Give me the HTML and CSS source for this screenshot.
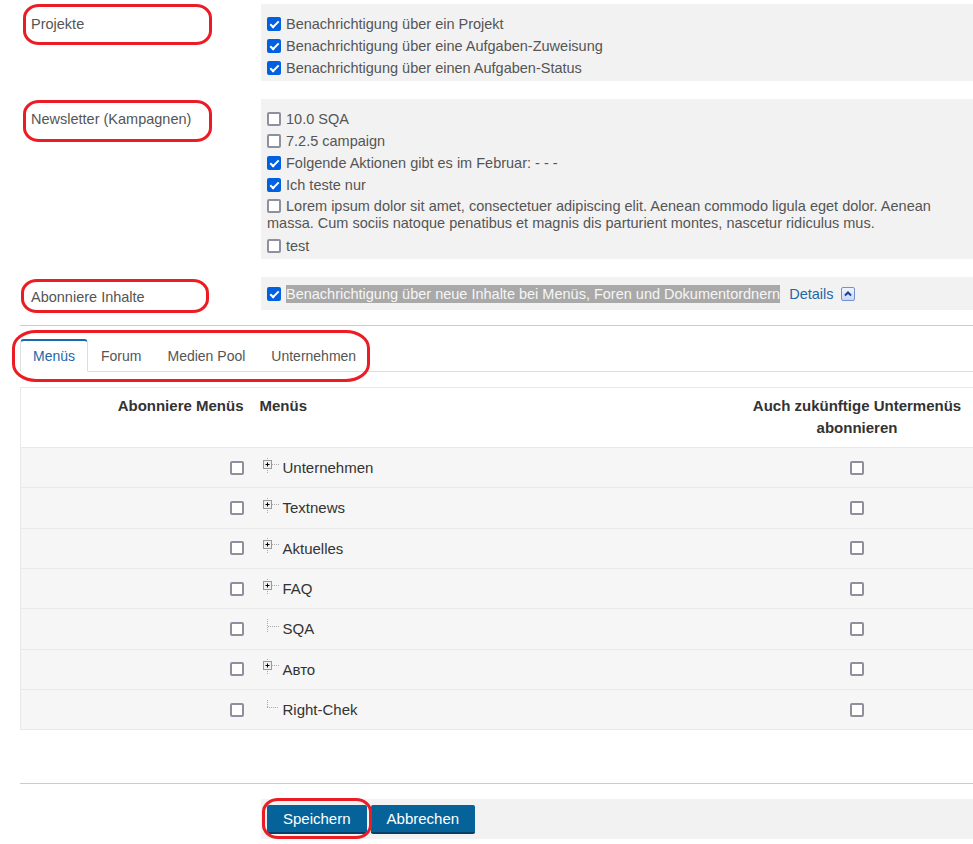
FILE: index.html
```html
<!DOCTYPE html>
<html lang="de">

<head>
    <meta charset="UTF-8">
    <title>Benachrichtigungen</title>
    <link rel="stylesheet" href="styles.css">
</head>

<body>
    <div class="page">

        <div class="setting">
            <div class="setting-label">Projekte</div>
            <div class="setting-box">
                <label class="opt"><input type="checkbox" class="cb" checked>Benachrichtigung über ein Projekt</label>
                <label class="opt"><input type="checkbox" class="cb" checked>Benachrichtigung über eine Aufgaben-Zuweisung</label>
                <label class="opt"><input type="checkbox" class="cb" checked>Benachrichtigung über einen Aufgaben-Status</label>
            </div>
        </div>

        <div class="setting">
            <div class="setting-label">Newsletter (Kampagnen)</div>
            <div class="setting-box">
                <label class="opt"><input type="checkbox" class="cb">10.0 SQA</label>
                <label class="opt"><input type="checkbox" class="cb">7.2.5 campaign</label>
                <label class="opt"><input type="checkbox" class="cb" checked>Folgende Aktionen gibt es im Februar: - - -</label>
                <label class="opt"><input type="checkbox" class="cb" checked>Ich teste nur</label>
                <label class="opt wrap"><input type="checkbox" class="cb">Lorem ipsum dolor sit amet, consectetuer adipiscing elit. Aenean commodo ligula eget dolor. Aenean massa. Cum sociis natoque penatibus et magnis dis parturient montes, nascetur ridiculus mus.</label>
                <label class="opt"><input type="checkbox" class="cb">test</label>
            </div>
        </div>

        <div class="setting last">
            <div class="setting-label">Abonniere Inhalte</div>
            <div class="setting-box single">
                <label class="opt"><input type="checkbox" class="cb" checked><span class="selected">Benachrichtigung über neue Inhalte bei Menüs, Foren und Dokumentordnern</span></label>
                <a href="#" class="details">Details</a>
                <span class="toggle">
                    <svg width="12" height="12" viewBox="0 0 12 12"><polyline points="3,7.5 6,4.5 9,7.5" fill="none" stroke="#1d3f93" stroke-width="2"/></svg>
                </span>
            </div>
        </div>

        <hr class="sep">

        <ul class="tabs">
            <li class="active"><a href="#">Menüs</a></li>
            <li><a href="#">Forum</a></li>
            <li><a href="#">Medien Pool</a></li>
            <li><a href="#">Unternehmen</a></li>
        </ul>

        <table class="menu-table">
            <colgroup>
                <col class="c-sub">
                <col>
                <col class="c-future">
            </colgroup>
            <thead>
                <tr>
                    <th class="col-sub">Abonniere Menüs</th>
                    <th class="col-name">Menüs</th>
                    <th class="col-future">Auch zukünftige Untermenüs abonnieren</th>
                </tr>
            </thead>
            <tbody>
                <tr>
                    <td class="col-sub"><input type="checkbox" class="cb"></td>
                    <td class="col-name"><span class="tree"><svg class="node" width="18" height="20" viewBox="0 0 18 20"><line x1="5.5" y1="0" x2="5.5" y2="15" stroke="#aaa" stroke-dasharray="1 1"/><line x1="10" y1="6.5" x2="17" y2="6.5" stroke="#aaa" stroke-dasharray="1 1"/><rect x="1.5" y="2.5" width="8" height="8" fill="#f0f0f0" stroke="#999"/><path d="M3.5 6.5h4M5.5 4.5v4" stroke="#000"/></svg>Unternehmen</span></td>
                    <td class="col-future"><input type="checkbox" class="cb"></td>
                </tr>
                <tr>
                    <td class="col-sub"><input type="checkbox" class="cb"></td>
                    <td class="col-name"><span class="tree"><svg class="node" width="18" height="20" viewBox="0 0 18 20"><line x1="5.5" y1="0" x2="5.5" y2="15" stroke="#aaa" stroke-dasharray="1 1"/><line x1="10" y1="6.5" x2="17" y2="6.5" stroke="#aaa" stroke-dasharray="1 1"/><rect x="1.5" y="2.5" width="8" height="8" fill="#f0f0f0" stroke="#999"/><path d="M3.5 6.5h4M5.5 4.5v4" stroke="#000"/></svg>Textnews</span></td>
                    <td class="col-future"><input type="checkbox" class="cb"></td>
                </tr>
                <tr>
                    <td class="col-sub"><input type="checkbox" class="cb"></td>
                    <td class="col-name"><span class="tree"><svg class="node" width="18" height="20" viewBox="0 0 18 20"><line x1="5.5" y1="0" x2="5.5" y2="15" stroke="#aaa" stroke-dasharray="1 1"/><line x1="10" y1="6.5" x2="17" y2="6.5" stroke="#aaa" stroke-dasharray="1 1"/><rect x="1.5" y="2.5" width="8" height="8" fill="#f0f0f0" stroke="#999"/><path d="M3.5 6.5h4M5.5 4.5v4" stroke="#000"/></svg>Aktuelles</span></td>
                    <td class="col-future"><input type="checkbox" class="cb"></td>
                </tr>
                <tr>
                    <td class="col-sub"><input type="checkbox" class="cb"></td>
                    <td class="col-name"><span class="tree"><svg class="node" width="18" height="20" viewBox="0 0 18 20"><line x1="5.5" y1="0" x2="5.5" y2="15" stroke="#aaa" stroke-dasharray="1 1"/><line x1="10" y1="6.5" x2="17" y2="6.5" stroke="#aaa" stroke-dasharray="1 1"/><rect x="1.5" y="2.5" width="8" height="8" fill="#f0f0f0" stroke="#999"/><path d="M3.5 6.5h4M5.5 4.5v4" stroke="#000"/></svg>FAQ</span></td>
                    <td class="col-future"><input type="checkbox" class="cb"></td>
                </tr>
                <tr>
                    <td class="col-sub"><input type="checkbox" class="cb"></td>
                    <td class="col-name"><span class="tree"><svg class="node" width="18" height="20" viewBox="0 0 18 20"><line x1="5.5" y1="0" x2="5.5" y2="14" stroke="#aaa" stroke-dasharray="1 1"/><line x1="6" y1="7.5" x2="17" y2="7.5" stroke="#aaa" stroke-dasharray="1 1"/></svg>SQA</span></td>
                    <td class="col-future"><input type="checkbox" class="cb"></td>
                </tr>
                <tr>
                    <td class="col-sub"><input type="checkbox" class="cb"></td>
                    <td class="col-name"><span class="tree"><svg class="node" width="18" height="20" viewBox="0 0 18 20"><line x1="5.5" y1="0" x2="5.5" y2="15" stroke="#aaa" stroke-dasharray="1 1"/><line x1="10" y1="6.5" x2="17" y2="6.5" stroke="#aaa" stroke-dasharray="1 1"/><rect x="1.5" y="2.5" width="8" height="8" fill="#f0f0f0" stroke="#999"/><path d="M3.5 6.5h4M5.5 4.5v4" stroke="#000"/></svg>Авто</span></td>
                    <td class="col-future"><input type="checkbox" class="cb"></td>
                </tr>
                <tr>
                    <td class="col-sub"><input type="checkbox" class="cb"></td>
                    <td class="col-name"><span class="tree"><svg class="node" width="18" height="20" viewBox="0 0 18 20"><line x1="5.5" y1="0" x2="5.5" y2="7" stroke="#aaa" stroke-dasharray="1 1"/><line x1="5" y1="7.5" x2="17" y2="7.5" stroke="#aaa" stroke-dasharray="1 1"/></svg>Right-Chek</span></td>
                    <td class="col-future"><input type="checkbox" class="cb"></td>
                </tr>
            </tbody>
        </table>

        <hr class="sep bottom">

        <div class="actions">
            <button class="btn">Speichern</button>
            <button class="btn">Abbrechen</button>
        </div>

        <!-- red annotations -->
        <div class="mark mark-projekte"></div>
        <div class="mark mark-newsletter"></div>
        <div class="mark mark-inhalte"></div>
        <div class="mark mark-tabs"></div>
        <div class="mark mark-save"></div>
    </div>
</body>

</html>
```

FILE: styles.css
```css
body {
    margin: 0;
    font-family: "Liberation Sans", Arial, sans-serif;
    font-size: 14.5px;
    color: #555;
    background: #fff;
}

.page {
    position: relative;
    padding: 4px 0 6px 20px;
}

/* settings blocks */

.setting {
    display: grid;
    grid-template-columns: 241px 1fr;
    margin-bottom: 18px;
}

.setting.last {
    margin-bottom: 15px;
}

.setting-label {
    padding: 12px 0 0 11px;
    line-height: 17px;
}

.setting-box {
    background: #f2f2f2;
    padding: 11px 8px 0 6px;
}

.setting-box.single {
    padding: 8px 8px 7px 6px;
    line-height: 18px;
}

.opt {
    display: block;
    line-height: 18px;
    margin-bottom: 4px;
}

.opt.wrap {
    line-height: 17px;
    margin-bottom: 5px;
}

.single .opt {
    display: inline;
}

.selected {
    background: #a9a9a9;
    color: #f6f6f6;
    padding: 1px 0;
}

.details {
    color: #1c68a8;
    text-decoration: none;
    margin-left: 5px;
}

.toggle {
    display: inline-block;
    width: 14px;
    height: 14px;
    box-sizing: border-box;
    border: 1px solid #7590d2;
    border-radius: 2px;
    background: linear-gradient(#f1f5fe, #c8d7f6);
    vertical-align: -2px;
    margin-left: 3px;
}

.toggle svg {
    display: block;
}

/* checkbox */

.cb {
    appearance: none;
    -webkit-appearance: none;
    box-sizing: border-box;
    width: 14px;
    height: 14px;
    margin: 0 5px 0 0;
    border: 2px solid #8f8f9d;
    border-radius: 2px;
    background: #fff;
    vertical-align: -2px;
    position: relative;
}

.cb:checked {
    background: #0060df;
    border-color: #0060df;
}

.cb:checked::after {
    content: "";
    position: absolute;
    left: 2.5px;
    top: -0.5px;
    width: 3px;
    height: 7px;
    border: solid #fff;
    border-width: 0 2px 2px 0;
    transform: rotate(45deg);
}

.sep {
    border: 0;
    border-top: 1px solid #ccc;
    margin: 0;
}

/* tabs */

.tabs {
    display: flex;
    list-style: none;
    margin: 13px 0 0;
    padding: 0;
    border-bottom: 1px solid #ddd;
    font-size: 14px;
}

.tabs li {
    margin-bottom: -1px;
}

.tabs a {
    display: block;
    padding: 7px 12px 6px;
    line-height: 17px;
    color: #555;
    text-decoration: none;
    border: 1px solid transparent;
    border-top-width: 2px;
}

.tabs .active a {
    color: #1c68a8;
    background: #fff;
    border-color: #ddd;
    border-top-color: #1c68a8;
    border-bottom-color: #fff;
    border-radius: 4px 4px 0 0;
}

/* menu table */

.menu-table {
    margin-top: 15px;
    width: 953px;
    table-layout: fixed;
    border-collapse: collapse;
    font-size: 15px;
    color: #333;
    border-left: 1px solid #e9e9e9;
    border-top: 1px solid #e9e9e9;
    border-bottom: 1px solid #e9e9e9;
}

.c-sub {
    width: 231px;
}

.c-future {
    width: 232px;
}

.menu-table th {
    height: 60px;
    box-sizing: border-box;
    padding: 7px 8px;
    line-height: 22px;
    vertical-align: top;
    font-weight: bold;
    background: #fff;
}

.menu-table td {
    height: 40.33px;
    box-sizing: border-box;
    padding: 0 8px;
    background: #f6f6f6;
    border-top: 1px solid #e9e9e9;
    vertical-align: middle;
}

.menu-table .col-sub {
    text-align: right;
}

.menu-table .col-name {
    text-align: left;
}

.menu-table .col-future {
    text-align: center;
}

.menu-table td .cb {
    display: block;
    margin: 0 auto;
}

.menu-table td.col-sub .cb {
    margin: 0 0 0 auto;
}

.tree {
    display: flex;
    align-items: center;
}

.node {
    flex-shrink: 0;
    margin: 0 3px 0 2px;
}

/* footer buttons */

.sep.bottom {
    margin-top: 53px;
}

.actions {
    display: flex;
    gap: 4px;
    margin: 15px 0 0 241px;
    padding: 6px 6px 5px;
    background: #f2f2f2;
}

.btn {
    font-family: "Liberation Sans", Arial, sans-serif;
    font-size: 15px;
    color: #fff;
    background: #06639a;
    border: 0;
    border-bottom: 2px solid #083f66;
    border-radius: 2px;
    padding: 5px 16px 4px;
    line-height: 18px;
    cursor: pointer;
}

/* annotation marks */

.mark {
    position: absolute;
    box-sizing: border-box;
    border: 3px solid #ec1c24;
    border-radius: 16px / 14px;
}

.mark-projekte {
    left: 23px;
    top: 4px;
    width: 189px;
    height: 41px;
}

.mark-newsletter {
    left: 23px;
    top: 100px;
    width: 189px;
    height: 42px;
}

.mark-inhalte {
    left: 21px;
    top: 279px;
    width: 188px;
    height: 34px;
}

.mark-tabs {
    left: 12px;
    top: 330px;
    width: 358px;
    height: 52px;
    border-radius: 24px / 18px;
}

.mark-save {
    left: 262px;
    top: 798px;
    width: 110px;
    height: 41px;
}
```
